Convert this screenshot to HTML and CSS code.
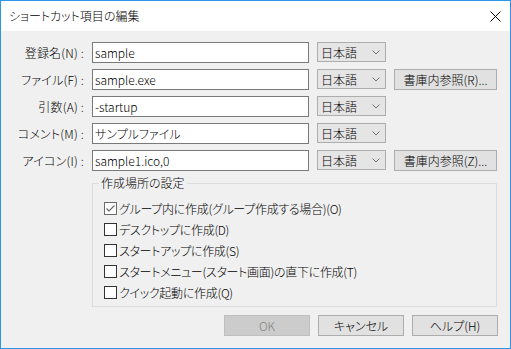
FILE: index.html
```html
<!DOCTYPE html>
<html lang="ja">
<head>
    <meta charset="UTF-8">
    <title>ショートカット項目の編集</title>
    <link rel="stylesheet" href="styles.css">
</head>
<body>
    <div class="window">
        <div class="titlebar">
            <span class="title">ショートカット項目の編集</span>
            <svg class="close" width="11" height="11" viewBox="0 0 11 11">
                <path d="M0.5 0.5 L10.5 10.5 M10.5 0.5 L0.5 10.5" stroke="#000" stroke-width="1" fill="none"/>
            </svg>
        </div>

        <div class="content">
            <div class="form">
                <label class="lbl">登録名(N) :</label>
                <input class="field" type="text" value="sample">
                <div class="combo"><span>日本語</span><svg width="8" height="5" viewBox="0 0 8 5"><path d="M0.5 0.5 L4 4 L7.5 0.5" stroke="#707070" fill="none"/></svg></div>
                <span></span>

                <label class="lbl">ファイル(F) :</label>
                <input class="field" type="text" value="sample.exe">
                <div class="combo"><span>日本語</span><svg width="8" height="5" viewBox="0 0 8 5"><path d="M0.5 0.5 L4 4 L7.5 0.5" stroke="#707070" fill="none"/></svg></div>
                <button class="btn">書庫内参照(R)...</button>

                <label class="lbl">引数(A) :</label>
                <input class="field" type="text" value="-startup">
                <div class="combo"><span>日本語</span><svg width="8" height="5" viewBox="0 0 8 5"><path d="M0.5 0.5 L4 4 L7.5 0.5" stroke="#707070" fill="none"/></svg></div>
                <span></span>

                <label class="lbl">コメント(M) :</label>
                <input class="field" type="text" value="サンプルファイル">
                <div class="combo"><span>日本語</span><svg width="8" height="5" viewBox="0 0 8 5"><path d="M0.5 0.5 L4 4 L7.5 0.5" stroke="#707070" fill="none"/></svg></div>
                <span></span>

                <label class="lbl">アイコン(I) :</label>
                <input class="field" type="text" value="sample1.ico,0">
                <div class="combo"><span>日本語</span><svg width="8" height="5" viewBox="0 0 8 5"><path d="M0.5 0.5 L4 4 L7.5 0.5" stroke="#707070" fill="none"/></svg></div>
                <button class="btn">書庫内参照(Z)...</button>
            </div>

            <fieldset class="group">
                <legend>作成場所の設定</legend>
                <div class="check"><span class="box checked"><svg width="11" height="11" viewBox="0 0 11 11"><path d="M1.5 5.5 L4 8 L9.5 2.5" stroke="#6a6a6a" stroke-width="1.2" fill="none"/></svg></span>グループ内に作成(グループ作成する場合)(O)</div>
                <div class="check"><span class="box"></span>デスクトップに作成(D)</div>
                <div class="check"><span class="box"></span>スタートアップに作成(S)</div>
                <div class="check"><span class="box"></span>スタートメニュー(スタート画面)の直下に作成(T)</div>
                <div class="check"><span class="box"></span>クイック起動に作成(Q)</div>
            </fieldset>

            <div class="actions">
                <button class="btn disabled">OK</button>
                <button class="btn">キャンセル</button>
                <button class="btn">ヘルプ(H)</button>
            </div>
        </div>
    </div>
</body>
</html>
```

FILE: styles.css
```css
body {
    margin: 0;
    font-family: "Noto Sans CJK JP", "Liberation Sans", sans-serif;
    font-size: 12px;
    font-weight: 300;
    font-feature-settings: "palt" 1;
    color: #000;
}
.window {
    width: 511px;
    height: 349px;
    box-sizing: border-box;
    border: 1px solid #2b97e8;
    background-color: #f0f0f0;
    display: flex;
    flex-direction: column;
}
.titlebar {
    height: 30px;
    flex: none;
    background-color: #fff;
    display: flex;
    align-items: center;
    justify-content: space-between;
    padding: 0 9px 0 8px;
}
.title {
    line-height: 16px;
}
.close {
    display: block;
}
.content {
    padding-top: 11px;
}
.form {
    display: grid;
    grid-template-columns: 83px 217px 69px 103px;
    grid-auto-rows: 21px;
    column-gap: 8px;
    row-gap: 6px;
    align-items: center;
}
.lbl {
    text-align: right;
    line-height: 16px;
    letter-spacing: 0.2px;
}
.field {
    box-sizing: border-box;
    height: 21px;
    width: 100%;
    margin: 0;
    border: 1px solid #7a7a7a;
    padding: 0 2px;
    font: inherit;
    font-feature-settings: "palt" 1;
    background: #fff;
    outline: none;
}
.combo {
    box-sizing: border-box;
    height: 20px;
    align-self: start;
    border: 1px solid #adadad;
    background-color: #e5e5e5;
    display: flex;
    align-items: center;
    justify-content: space-between;
    padding: 0 5px 0 3px;
}
.combo svg {
    display: block;
}
.btn {
    box-sizing: border-box;
    height: 21px;
    margin: 0;
    padding: 0;
    border: 1px solid #adadad;
    background-color: #e1e1e1;
    font: inherit;
    font-feature-settings: "palt" 1;
    color: #000;
}
.btn.disabled {
    background-color: #cccccc;
    border-color: #bfbfbf;
    color: #838383;
}
.group {
    margin: 4px 13px 0 91px;
    padding: 7px 0 3px 11px;
    border: 1px solid #dcdcdc;
}
.group legend {
    margin-left: -5px;
    padding: 0 2px;
    line-height: 16px;
}
.check {
    height: 21px;
    display: flex;
    align-items: center;
    gap: 2px;
    letter-spacing: -0.3px;
}
.box {
    box-sizing: border-box;
    width: 13px;
    height: 13px;
    border: 1px solid #333;
    background: #fff;
    display: flex;
    align-items: center;
    justify-content: center;
}
.box.checked {
    border-color: #6a6a6a;
}
.actions {
    display: flex;
    justify-content: flex-end;
    gap: 8px;
    padding: 8px 12px 0 0;
}
.actions .btn {
    width: 86px;
}
```
